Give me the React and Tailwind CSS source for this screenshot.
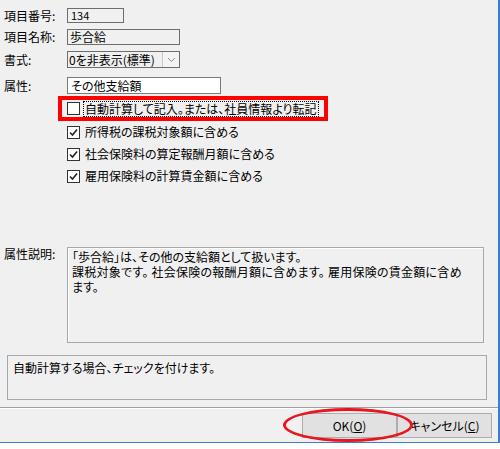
import React from "react";

const font = { fontFamily: '"Noto Sans CJK JP", "Noto Sans", sans-serif' };

const CheckBox = ({ checked }) => (
  <div className="w-[13px] h-[13px] border border-[#333333] bg-white flex items-center justify-center shrink-0">
    {checked && (
      <svg width="9" height="9" viewBox="0 0 9 9">
        <path d="M1 4.5 L3.5 7 L8 1.5" fill="none" stroke="#222" strokeWidth="1.6" />
      </svg>
    )}
  </div>
);

const Label = ({ children }) => (
  <div className="w-[63px] shrink-0 text-[12px] leading-[14px] text-black">{children}</div>
);

export default function App() {
  return (
    <div className="w-[500px] h-[449px] bg-white overflow-hidden [font-feature-settings:'palt']" style={font}>
      <div className="relative w-[500px] h-[443px] bg-[#f0f0f0] border-r-2 border-b border-[#3b7fd3] flex flex-col pl-[4px] text-black">
        {/* Item fields */}
        <div className="flex items-center mt-[8px] h-[15px]">
          <Label>項目番号:</Label>
          <div className="w-[57px] h-[15px] border border-[#6d6d6d] bg-[#f0f0f0] text-[11px] leading-[13px] pl-[3px]">134</div>
        </div>
        <div className="flex items-center mt-[6px] h-[16px]">
          <Label>項目名称:</Label>
          <div className="w-[113px] h-[16px] border border-[#6d6d6d] bg-[#f0f0f0] text-[12px] leading-[14px] pl-[2px]">歩合給</div>
        </div>
        <div className="flex items-center mt-[6px] h-[17px]">
          <Label>書式:</Label>
          <div className="w-[113px] h-[17px] border border-[#6d6d6d] bg-[#f0f0f0] flex">
            <div className="flex-1 text-[12px] leading-[15px] pl-[1px]">0を非表示(標準)</div>
            <div className="w-[17px] h-full border-l border-[#c8c8c8] bg-[#f4f4f4] flex items-center justify-center">
              <svg width="9" height="6" viewBox="0 0 9 6">
                <path d="M1 1 L4.5 4.5 L8 1" fill="none" stroke="#8a8a8a" strokeWidth="1" />
              </svg>
            </div>
          </div>
        </div>
        <div className="flex items-center mt-[9px] h-[17px]">
          <Label>属性:</Label>
          <div className="w-[154px] h-[17px] border border-[#7a7a7a] bg-white text-[12px] leading-[15px] pl-[3px]">その他支給額</div>
        </div>

        {/* Checkboxes */}
        <div className="ml-[54px] mt-[2px] w-[270px] h-[25px] border-4 border-[#ff0000] flex items-center pl-[5px]">
          <CheckBox checked={false} />
          <div className="ml-[3px] border border-dotted border-black px-[1px] text-[12px] leading-[14px] whitespace-nowrap">
            自動計算して記入。または、社員情報より転記
          </div>
        </div>
        {["所得税の課税対象額に含める", "社会保険料の算定報酬月額に含める", "雇用保険料の計算賃金額に含める"].map((t) => (
          <div key={t} className="flex items-center h-[22px] pl-[63px]">
            <CheckBox checked />
            <span className="ml-[5px] text-[12px] leading-[14px]">{t}</span>
          </div>
        ))}

        {/* Description */}
        <div className="flex mt-[60px]">
          <div className="w-[63px] shrink-0 text-[12px] leading-[14px]">属性説明:</div>
          <div className="w-[417px] h-[96px] border border-[#a8a8a8] shadow-[inset_1px_1px_0_#fff] bg-[#f0f0f0] text-[12px] leading-[15px] pl-[4px] pt-[1px]">
            「歩合給」は、その他の支給額として扱います。
            <br />
            <span className="tracking-[0.25px]">課税対象です。 社会保険の報酬月額に含めます。 雇用保険の賃金額に含め</span>
            <br />
            ます。
          </div>
        </div>

        {/* Hint */}
        <div className="ml-[3px] mt-[12px] w-[480px] h-[45px] border border-[#a8a8a8] text-[12px] leading-[14px] pl-[5px] pt-[5px]">
          自動計算する場合、チェックを付けます。
        </div>

        {/* Separator */}
        <div className="-ml-[4px] mt-[7px] w-[498px] h-[2px] border-t border-[#a0a0a0] border-b border-b-white" />

        {/* Buttons */}
        <div className="flex justify-end pr-[6px] mt-[4px]">
          <div className="w-[95px] h-[25px] border border-[#adadad] bg-[#e1e1e1] flex items-center justify-center text-[12px]">
            OK(<span className="underline">O</span>)
          </div>
          <div className="w-[95px] h-[25px] border border-[#adadad] bg-[#e1e1e1] flex items-center justify-center text-[12px]">
            キャンセル(<span className="underline">C</span>)
          </div>
        </div>

        {/* Annotation ellipse */}
        <div className="absolute left-[283px] top-[408px] w-[130px] h-[34px] rounded-[50%] border-[3px] border-[#e8141e]" />
      </div>
    </div>
  );
}
